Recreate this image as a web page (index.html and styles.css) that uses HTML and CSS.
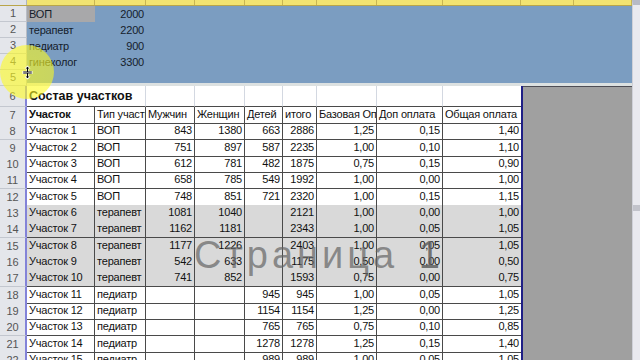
FILE: index.html
```html
<!DOCTYPE html>
<html lang="ru">
<head>
<meta charset="utf-8">
<title>Состав участков</title>
<link rel="stylesheet" href="styles.css">
</head>
<body>
<div class="app">
  <div class="sheet">
    <div class="colhead">
      <div class="corner"></div>
      <div class="ch">A</div><div class="ch">B</div><div class="ch">C</div><div class="ch">D</div><div class="ch">E</div><div class="ch">F</div><div class="ch">G</div><div class="ch">H</div><div class="ch">I</div><div class="ch">J</div><div class="ch">K</div>
    </div>
    <div class="top">
      <div class="trow"><div class="rh">1</div><div class="c active">ВОП</div><div class="c num">2000</div><div class="c"></div></div>
      <div class="trow"><div class="rh">2</div><div class="c">терапевт</div><div class="c num">2200</div><div class="c"></div></div>
      <div class="trow"><div class="rh">3</div><div class="c">педиатр</div><div class="c num">900</div><div class="c"></div></div>
      <div class="trow"><div class="rh">4</div><div class="c">гинеколог</div><div class="c num">3300</div><div class="c"></div></div>
      <div class="trow last"><div class="rh">5</div><div class="c"></div><div class="c"></div><div class="c"></div></div>
    </div>
    <div class="lower">
      <div class="print">
        <div class="row title"><div class="rh">6</div><div class="c titletext">Состав участков</div><div class="c"></div><div class="c"></div><div class="c"></div><div class="c"></div><div class="c"></div><div class="c"></div><div class="c"></div></div>
        <div class="row"><div class="rh">7</div><div class="c b">Участок</div><div class="c">Тип участка</div><div class="c">Мужчин</div><div class="c">Женщин</div><div class="c">Детей</div><div class="c">итого</div><div class="c">Базовая Оплата</div><div class="c">Доп оплата</div><div class="c">Общая оплата</div></div>
        <div class="row"><div class="rh">8</div><div class="c">Участок 1</div><div class="c">ВОП</div><div class="c num">843</div><div class="c num">1380</div><div class="c num">663</div><div class="c num">2886</div><div class="c num">1,25</div><div class="c num">0,15</div><div class="c num">1,40</div></div>
        <div class="row"><div class="rh">9</div><div class="c">Участок 2</div><div class="c">ВОП</div><div class="c num">751</div><div class="c num">897</div><div class="c num">587</div><div class="c num">2235</div><div class="c num">1,00</div><div class="c num">0,10</div><div class="c num">1,10</div></div>
        <div class="row"><div class="rh">10</div><div class="c">Участок 3</div><div class="c">ВОП</div><div class="c num">612</div><div class="c num">781</div><div class="c num">482</div><div class="c num">1875</div><div class="c num">0,75</div><div class="c num">0,15</div><div class="c num">0,90</div></div>
        <div class="row"><div class="rh">11</div><div class="c">Участок 4</div><div class="c">ВОП</div><div class="c num">658</div><div class="c num">785</div><div class="c num">549</div><div class="c num">1992</div><div class="c num">1,00</div><div class="c num">0,00</div><div class="c num">1,00</div></div>
        <div class="row"><div class="rh">12</div><div class="c">Участок 5</div><div class="c">ВОП</div><div class="c num">748</div><div class="c num">851</div><div class="c num">721</div><div class="c num">2320</div><div class="c num">1,00</div><div class="c num">0,15</div><div class="c num">1,15</div></div>
        <div class="row shade"><div class="rh">13</div><div class="c">Участок 6</div><div class="c">терапевт</div><div class="c num">1081</div><div class="c num">1040</div><div class="c num"></div><div class="c num">2121</div><div class="c num">1,00</div><div class="c num">0,00</div><div class="c num">1,00</div></div>
        <div class="row shade"><div class="rh">14</div><div class="c">Участок 7</div><div class="c">терапевт</div><div class="c num">1162</div><div class="c num">1181</div><div class="c num"></div><div class="c num">2343</div><div class="c num">1,00</div><div class="c num">0,05</div><div class="c num">1,05</div></div>
        <div class="row shade"><div class="rh">15</div><div class="c">Участок 8</div><div class="c">терапевт</div><div class="c num">1177</div><div class="c num">1226</div><div class="c num"></div><div class="c num">2403</div><div class="c num">1,00</div><div class="c num">0,05</div><div class="c num">1,05</div></div>
        <div class="row shade"><div class="rh">16</div><div class="c">Участок 9</div><div class="c">терапевт</div><div class="c num">542</div><div class="c num">633</div><div class="c num"></div><div class="c num">1175</div><div class="c num">0,50</div><div class="c num">0,00</div><div class="c num">0,50</div></div>
        <div class="row shade"><div class="rh">17</div><div class="c">Участок 10</div><div class="c">терапевт</div><div class="c num">741</div><div class="c num">852</div><div class="c num"></div><div class="c num">1593</div><div class="c num">0,75</div><div class="c num">0,00</div><div class="c num">0,75</div></div>
        <div class="row"><div class="rh">18</div><div class="c">Участок 11</div><div class="c">педиатр</div><div class="c num"></div><div class="c num"></div><div class="c num">945</div><div class="c num">945</div><div class="c num">1,00</div><div class="c num">0,05</div><div class="c num">1,05</div></div>
        <div class="row"><div class="rh">19</div><div class="c">Участок 12</div><div class="c">педиатр</div><div class="c num"></div><div class="c num"></div><div class="c num">1154</div><div class="c num">1154</div><div class="c num">1,25</div><div class="c num">0,00</div><div class="c num">1,25</div></div>
        <div class="row"><div class="rh">20</div><div class="c">Участок 13</div><div class="c">педиатр</div><div class="c num"></div><div class="c num"></div><div class="c num">765</div><div class="c num">765</div><div class="c num">0,75</div><div class="c num">0,10</div><div class="c num">0,85</div></div>
        <div class="row"><div class="rh">21</div><div class="c">Участок 14</div><div class="c">педиатр</div><div class="c num"></div><div class="c num"></div><div class="c num">1278</div><div class="c num">1278</div><div class="c num">1,25</div><div class="c num">0,15</div><div class="c num">1,40</div></div>
        <div class="row"><div class="rh">22</div><div class="c">Участок 15</div><div class="c">педиатр</div><div class="c num"></div><div class="c num"></div><div class="c num">989</div><div class="c num">989</div><div class="c num">1,00</div><div class="c num">0,05</div><div class="c num">1,05</div></div>
      </div>
      <div class="outside"></div>
    </div>
    <div class="watermark"><span class="wm-word">Страница</span> <span class="wm-num">1</span></div>
    <div class="spot"></div>
    <svg class="cursor" width="11" height="15" viewBox="0 0 11 15">
      <path d="M5.5 0.5 L8.5 3.5 L6.5 3.5 L6.5 6 L10.5 6 L10.5 9 L6.5 9 L6.5 11.5 L8.5 11.5 L5.5 14.5 L2.5 11.5 L4.5 11.5 L4.5 9 L0.5 9 L0.5 6 L4.5 6 L4.5 3.5 L2.5 3.5 Z" fill="#fff"/>
      <path d="M5.5 1.8 L7.3 3.6 L6 3.6 L6 6.6 L9.8 6.6 L9.8 7.2 L1.2 7.2 L1.2 6.6 L5 6.6 L5 3.6 L3.7 3.6 Z M1.2 7.8 L9.8 7.8 L9.8 8.4 L6 8.4 L6 11.4 L7.3 11.4 L5.5 13.2 L3.7 11.4 L5 11.4 L5 8.4 L1.2 8.4 Z" fill="#000"/>
    </svg>
  </div>
  <div class="vscroll"><div class="vthumb"></div></div>
</div>
</body>
</html>
```
FILE: styles.css
```css
* { box-sizing: border-box; margin: 0; padding: 0; }
body {
  margin: 0;
  width: 640px;
  height: 360px;
  overflow: hidden;
  font-family: "Liberation Sans", Arial, sans-serif;
  font-size: 11px;
  letter-spacing: -0.2px;
  color: #111;
  background: #fff;
}
.app { display: flex; height: 360px; }
.sheet { position: relative; width: 632px; height: 360px; overflow: hidden; }

.colhead {
  display: grid;
  grid-template-columns: 27px 68px 51px 49px 50px 38px 34px 60px 66px 78px 53px 1fr;
  height: 18px;
  margin-top: -12px;
  background: #f2e371;
  border-bottom: 1px solid #b9a54a;
}
.corner { background: #dfe2e8; border-right: 1px solid #b0b4bc; }
.ch { border-right: 1px solid #c8b552; text-align: center; line-height: 17px; color: #3a3a3a; }

.trow {
  display: grid;
  grid-template-columns: 27px 68px 51px 1fr;
  height: 16px;
  background: #7b9dc1;
}
.rh {
  background: #e4e6eb;
  color: #555;
  text-align: center;
  line-height: 15px;
  border-bottom: 1px solid #c3c7cf;
  border-right: 1px solid #b9bdc6;
  letter-spacing: 0;
}
.c { padding: 0 2px; line-height: 16px; white-space: nowrap; overflow: hidden; }
.num { text-align: right; }
.trow .c { color: #15202c; }
.active { background: #a8a8aa; }
.trow.last .c { border-bottom: 3px solid #dce1e1; }

.lower { display: flex; height: 274px; }
.print { width: 523px; border-right: 2px solid #1f1f86; overflow: hidden; }
.outside { flex: 1; background: #a0a0a0; border-top: 1px solid #4d4d55; }

.row {
  display: grid;
  grid-template-columns: 27px 68px 51px 49px 50px 38px 34px 60px 66px 78px;
  height: 16.33px;
}
.row .rh { border-right: 2px solid #8383d8; line-height: 16px; }
.row .c { border-right: 1px solid #4a4a4a; border-bottom: 1px solid #4a4a4a; line-height: 15px; }
.row .c:last-child { border-right: none; }
.row.title { height: 21px; }
.row.title .rh { line-height: 20px; }
.row.title .c { border-right-color: #d3d8e1; line-height: 20px; }
.row.title .titletext {
  grid-column: span 2;
  overflow: visible;
  font-weight: bold;
  font-size: 12.5px;
  letter-spacing: 0;
}
.b { font-weight: bold; }
.shade .c { background: #d9d9d9; }

.watermark {
  position: absolute;
  left: 194px;
  top: 236px;
  width: 270px;
  font-size: 38px;
  line-height: 38px;
  letter-spacing: 4px;
  color: rgba(100, 100, 100, 0.7);
  white-space: nowrap;
  pointer-events: none;
  z-index: 5;
}
.wm-num { margin-left: 6px; color: rgba(95, 95, 95, 0.85); }
.spot {
  position: absolute;
  left: 0;
  top: 45px;
  width: 54px;
  height: 54px;
  border-radius: 50%;
  background: radial-gradient(circle, rgba(255, 252, 30, 0.62) 0, rgba(255, 252, 30, 0.58) 78%, rgba(255, 252, 30, 0) 100%);
  pointer-events: none;
}
.cursor { position: absolute; left: 22px; top: 65px; }

.vscroll {
  width: 8px;
  background: #e9e9ef;
  border-left: 1px solid #cfd0d8;
  border-top: 5px solid #b7bac6;
}
.vthumb { margin-top: 200px; height: 6px; background: #c2c3cb; }
```
